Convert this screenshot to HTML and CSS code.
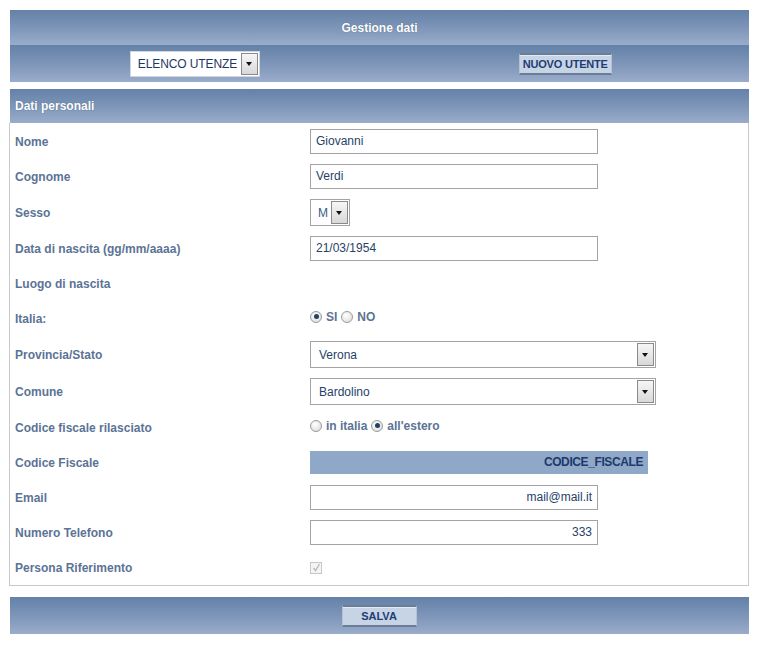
FILE: index.html
```html
<!DOCTYPE html>
<html lang="it">
<head>
<meta charset="utf-8">
<title>Gestione dati</title>
<link rel="stylesheet" href="styles.css">
</head>
<body>
<div class="page">
  <div class="bar title">Gestione dati</div>
  <div class="bar toolbar">
    <div class="half">
      <div class="select sel-list"><span class="sel-text">ELENCO UTENZE</span><span class="arrow"></span></div>
    </div>
    <div class="half">
      <button class="btn btn-new">NUOVO UTENTE</button>
    </div>
  </div>

  <div class="bar section-head">Dati personali</div>
  <div class="form">
    <div class="row"><div class="label">Nome</div><div class="value"><div class="input">Giovanni</div></div></div>
    <div class="row"><div class="label">Cognome</div><div class="value"><div class="input">Verdi</div></div></div>
    <div class="row tall"><div class="label">Sesso</div><div class="value"><div class="select sel-small"><span class="sel-text">M</span><span class="arrow"></span></div></div></div>
    <div class="row"><div class="label">Data di nascita (gg/mm/aaaa)</div><div class="value"><div class="input">21/03/1954</div></div></div>
    <div class="row"><div class="label">Luogo di nascita</div><div class="value"></div></div>
    <div class="row"><div class="label">Italia:</div><div class="value radios"><span class="radio on"></span><span class="rlabel">SI</span><span class="radio"></span><span class="rlabel">NO</span></div></div>
    <div class="row tall"><div class="label">Provincia/Stato</div><div class="value"><div class="select sel-wide"><span class="sel-text">Verona</span><span class="arrow"></span></div></div></div>
    <div class="row tall"><div class="label">Comune</div><div class="value"><div class="select sel-wide"><span class="sel-text">Bardolino</span><span class="arrow"></span></div></div></div>
    <div class="row"><div class="label">Codice fiscale rilasciato</div><div class="value radios"><span class="radio"></span><span class="rlabel">in italia</span><span class="radio on"></span><span class="rlabel">all'estero</span></div></div>
    <div class="row"><div class="label">Codice Fiscale</div><div class="value"><div class="cf">CODICE_FISCALE</div></div></div>
    <div class="row"><div class="label">Email</div><div class="value"><div class="input right">mail@mail.it</div></div></div>
    <div class="row"><div class="label">Numero Telefono</div><div class="value"><div class="input right">333</div></div></div>
    <div class="row"><div class="label">Persona Riferimento</div><div class="value"><span class="check"><svg width="9" height="9" viewBox="0 0 9 9"><path d="M1.5 5 L3.5 7.5 L7.5 1" fill="none" stroke="#b8b8b8" stroke-width="1.3"/></svg></span></div></div>
  </div>

  <div class="bar footer">
    <button class="btn btn-save">SALVA</button>
  </div>
</div>
</body>
</html>
```

FILE: styles.css
```css
html, body {
  margin: 0;
  padding: 0;
  background: #ffffff;
}
body {
  font-family: "Liberation Sans", Arial, sans-serif;
  font-size: 12px;
}
.page {
  width: 739px;
  margin: 10px 0 0 10px;
}
.bar {
  background: linear-gradient(to bottom, #6481a8 0%, #7d95b8 50%, #9aaccb 100%);
  color: #ffffff;
}
.title {
  height: 35px;
  display: flex;
  align-items: center;
  justify-content: center;
  font-weight: bold;
  font-size: 12px;
  text-shadow: 0 0 1px rgba(40, 60, 90, 0.6);
}
.toolbar {
  height: 37px;
  display: flex;
}
.half {
  flex: 1;
  display: flex;
  align-items: center;
  justify-content: center;
}
.section-head {
  margin-top: 7px;
  height: 34px;
  display: flex;
  align-items: center;
  padding-left: 5px;
  font-weight: bold;
  font-size: 12px;
  text-shadow: 0 0 1px rgba(40, 60, 90, 0.6);
}
.form {
  margin-left: -1px;
  border: 1px solid #c9c9c9;
  border-top: none;
  padding-top: 1px;
}
.row {
  height: 35px;
  display: flex;
  align-items: center;
}
.row.tall {
  height: 37px;
}
.label {
  box-sizing: border-box;
  width: 300px;
  padding-left: 5px;
  color: #5b7395;
  font-weight: bold;
  font-size: 12px;
}
.value {
  display: flex;
  align-items: center;
}
.input {
  box-sizing: border-box;
  width: 288px;
  height: 25px;
  border: 1px solid #a3a3a3;
  background: #fff;
  color: #283f68;
  font-size: 12px;
  line-height: 23px;
  padding: 0 5px;
}
.input.right {
  text-align: right;
}
.select {
  box-sizing: border-box;
  display: flex;
  align-items: stretch;
  background: #fff;
  border: 1px solid #a3a3a3;
  color: #283f68;
  font-size: 12px;
}
.sel-text {
  flex: 1;
  display: flex;
  align-items: center;
  padding-left: 7px;
  white-space: nowrap;
  overflow: hidden;
}
.arrow {
  flex: none;
  width: 15px;
  margin: 1px 1px 1px 0;
  border: 1px solid #8a8a8a;
  background: linear-gradient(to bottom, #f6f6f6, #d8d8d8);
  position: relative;
}
.arrow::after {
  content: "";
  position: absolute;
  left: 4px;
  top: 50%;
  margin-top: -2px;
  border-left: 3.5px solid transparent;
  border-right: 3.5px solid transparent;
  border-top: 4px solid #111;
}
.sel-list {
  width: 130px;
  height: 26px;
  border-color: #d0d6e0;
  color: #1f3766;
  font-size: 12px;
}
.sel-list .sel-text {
  padding-left: 7px;
  letter-spacing: -0.1px;
}
.sel-small {
  width: 40px;
  height: 27px;
}
.sel-small .sel-text {
  padding-left: 7px;
  color: #3b5a8f;
}
.sel-wide {
  width: 346px;
  height: 27px;
}
.sel-wide .sel-text {
  padding-left: 8px;
}
.btn {
  font-family: "Liberation Sans", Arial, sans-serif;
  font-weight: bold;
  font-size: 11px;
  color: #1f3d72;
  background: #c7d4e6;
  border: none;
  border-top: 2px solid #6b7d99;
  border-bottom: 2px solid #6b7d99;
  border-left: 1px solid #b4c2d6;
  border-right: 1px solid #b4c2d6;
  padding: 0;
  margin: 0;
  box-shadow: inset 0 1px 0 #e3eaf3;
}
.btn-new {
  width: 93px;
  height: 22px;
  margin-left: 2px;
  letter-spacing: -0.2px;
}
.footer {
  margin-top: 11px;
  height: 37px;
  display: flex;
  align-items: center;
  justify-content: center;
}
.btn-save {
  width: 75px;
  height: 22px;
  margin-left: -1px;
}
.radios {
  color: #5b7395;
  font-weight: bold;
  font-size: 12px;
  position: relative;
  top: -2px;
}
.radio {
  box-sizing: border-box;
  width: 12px;
  height: 12px;
  border-radius: 50%;
  border: 1px solid #9a9a9a;
  background: radial-gradient(circle at 40% 35%, #ffffff, #d8d8d8);
  position: relative;
  margin-right: 4px;
}
.radio.on::after {
  content: "";
  position: absolute;
  left: 2.5px;
  top: 2.5px;
  width: 5px;
  height: 5px;
  border-radius: 50%;
  background: #24415f;
}
.rlabel {
  margin-right: 4px;
}
.cf {
  box-sizing: border-box;
  width: 338px;
  height: 23px;
  background: #8fa8c7;
  color: #1c3a6e;
  font-weight: bold;
  font-size: 12px;
  letter-spacing: -0.4px;
  text-align: right;
  line-height: 23px;
  padding-right: 5px;
}
.check {
  box-sizing: border-box;
  width: 12px;
  height: 12px;
  border: 1px solid #c6c6c6;
  background: #f4f4f4;
  display: flex;
  align-items: center;
  justify-content: center;
}
```
